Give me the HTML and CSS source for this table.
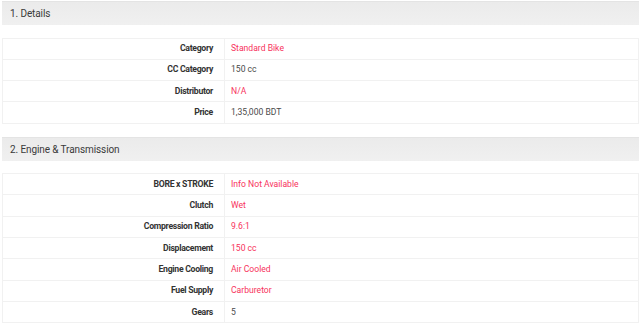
FILE: index.html
```html
<!DOCTYPE html>
<html>
<head>
<meta charset="utf-8">
<link rel="stylesheet" href="styles.css">
</head>
<body>
<div class="specs">
  <div class="sec-head">1. Details</div>
  <table class="spec-table">
    <tr><th>Category</th><td class="hl">Standard Bike</td></tr>
    <tr><th>CC Category</th><td>150 cc</td></tr>
    <tr><th>Distributor</th><td class="hl">N/A</td></tr>
    <tr><th>Price</th><td>1,35,000 BDT</td></tr>
  </table>
  <div class="sec-head">2. Engine &amp; Transmission</div>
  <table class="spec-table">
    <tr><th>BORE x STROKE</th><td class="hl">Info Not Available</td></tr>
    <tr><th>Clutch</th><td class="hl">Wet</td></tr>
    <tr><th>Compression Ratio</th><td class="hl">9.6:1</td></tr>
    <tr><th>Displacement</th><td class="hl">150 cc</td></tr>
    <tr><th>Engine Cooling</th><td class="hl">Air Cooled</td></tr>
    <tr><th>Fuel Supply</th><td class="hl">Carburetor</td></tr>
    <tr><th>Gears</th><td>5</td></tr>
  </table>
</div>
</body>
</html>
```
FILE: styles.css
```css
html, body {
  margin: 0;
  padding: 0;
  background: #ffffff;
  overflow: hidden;
}
body {
  font-family: Roboto, "Liberation Sans", Arial, sans-serif;
  color: #444;
}
.specs {
  margin: 1px 1px 0 2px;
}
.sec-head {
  height: 24px;
  line-height: 23px;
  padding-left: 8px;
  font-size: 10px;
  letter-spacing: -0.1px;
  color: #3a3a3a;
  background: linear-gradient(#ebebeb, #f0f0f0);
  border-top: 1px solid #e4e4e4;
  box-sizing: border-box;
}
.spec-table {
  width: 100%;
  border-collapse: collapse;
  margin: 12.5px 0 13px 0;
  font-size: 8.6px;
}
.spec-table tr {
  height: 21.3px;
}
.spec-table th,
.spec-table td {
  border: 1px solid #f1f1f1;
  padding: 0;
  line-height: 11px;
  vertical-align: middle;
}
.spec-table th {
  width: 222px;
  text-align: right;
  font-weight: 700;
  font-size: 8.7px;
  letter-spacing: -0.3px;
  color: #333;
  padding-right: 11px;
  box-sizing: border-box;
}
.spec-table td {
  text-align: left;
  padding-left: 6px;
  color: #4a4a4a;
}
.spec-table td.hl {
  color: #f7325c;
}
```
